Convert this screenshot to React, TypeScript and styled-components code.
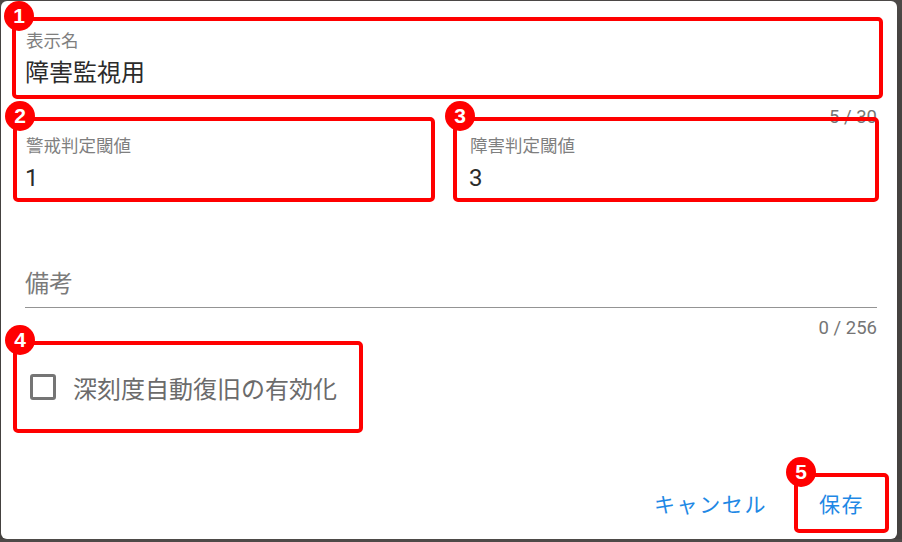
import { FC } from 'react'
import styled, { createGlobalStyle } from 'styled-components'

const GlobalStyle = createGlobalStyle`
	html, body {
		margin: 0;
		padding: 0;
	}
	body {
		background: #4d4a48;
		font-family: Roboto, 'Noto Sans CJK JP', sans-serif;
		overflow: hidden;
	}
`

const Dialog = styled.div`
	box-sizing: border-box;
	margin: 1px 0 0 1px;
	width: 896px;
	height: 538px;
	background: #fff;
	border-radius: 6px;
	display: flex;
	flex-direction: column;
	box-shadow: 0 11px 15px -7px rgba(0, 0, 0, 0.2), 0 24px 38px 3px rgba(0, 0, 0, 0.14);
`

const Content = styled.div`
	padding: 16px 20px 0 24px;
	display: flex;
	flex-direction: column;
`

const FieldGrid = styled.div`
	display: grid;
	grid-template-columns: 1fr 1fr;
	column-gap: 36px;
`

const FieldBox = styled.div`
	position: relative;
	box-sizing: border-box;
	height: 80px;
	padding-top: 14px;
	display: flex;
	flex-direction: column;
`

const FieldLabel = styled.label`
	font-size: 17.5px;
	line-height: 20px;
	color: #7f7f7f;
	padding-left: 1px;
`

const FieldValue = styled.div`
	margin-top: 8px;
	font-size: 24px;
	line-height: 28px;
	color: #2b2b2b;
`

const NoteField = styled.div`
	position: relative;
	box-sizing: border-box;
	height: 81px;
	padding-top: 43px;
	border-bottom: 1px solid #949494;
	font-size: 24px;
	line-height: 28px;
	color: #7a7a7a;
`

const HelperRow = styled.div`
	box-sizing: border-box;
	height: 25px;
	padding-top: 10px;
	text-align: right;
	font-size: 18.5px;
	line-height: 20px;
	color: #757575;
`

const CheckRow = styled.label`
	position: relative;
	align-self: flex-start;
	margin-top: 24px;
	height: 60px;
	padding-left: 5px;
	display: inline-flex;
	align-items: center;
	gap: 17px;
	font-size: 24px;
	color: #6b6b6b;
`

const CheckSquare = styled.span`
	box-sizing: border-box;
	width: 26px;
	height: 26px;
	border: 3px solid #757575;
	border-radius: 3px;
`

const Actions = styled.div`
	margin-top: auto;
	padding: 0 11px 10px 0;
	display: flex;
	justify-content: flex-end;
	align-items: center;
	gap: 18px;
`

const TextButton = styled.button`
	position: relative;
	box-sizing: border-box;
	height: 52px;
	min-width: 89px;
	padding: 0 12px;
	border: none;
	background: transparent;
	color: #1e88e5;
	font-family: Roboto, 'Noto Sans CJK JP', sans-serif;
	font-size: 21px;
	letter-spacing: 1.6px;
	cursor: pointer;
`

const Frame = styled.div<{ $inset: string }>`
	position: absolute;
	inset: ${({ $inset }) => $inset};
	border: 4px solid #ff0000;
	border-radius: 5px;
	pointer-events: none;
	z-index: 2;
`

const Badge = styled.span`
	position: absolute;
	left: -12px;
	top: -20px;
	width: 30px;
	height: 30px;
	border-radius: 50%;
	background: #ff0000;
	color: #fff;
	font-family: 'Liberation Sans', Arial, sans-serif;
	font-weight: bold;
	font-size: 21px;
	line-height: 30px;
	text-align: center;
	letter-spacing: 0;
`

type MarkProps = {
	n: number
	inset: string
}

const Mark: FC<MarkProps> = ({ n, inset }) => (
	<Frame $inset={inset}>
		<Badge>{n}</Badge>
	</Frame>
)

export default function App() {
	return (
		<>
			<GlobalStyle />
			<Dialog>
				<Content>
					<FieldBox>
						<FieldLabel>表示名</FieldLabel>
						<FieldValue>障害監視用</FieldValue>
						<Mark n={1} inset={'0 -6px -2px -13px'} />
					</FieldBox>
					<HelperRow>5 / 30</HelperRow>
					<FieldGrid>
						<FieldBox>
							<FieldLabel>警戒判定閾値</FieldLabel>
							<FieldValue>1</FieldValue>
							<Mark n={2} inset={'-5px -2px 0 -12px'} />
						</FieldBox>
						<FieldBox>
							<FieldLabel>障害判定閾値</FieldLabel>
							<FieldValue>3</FieldValue>
							<Mark n={3} inset={'-5px -2px 0 -16px'} />
						</FieldBox>
					</FieldGrid>
					<HelperRow />
					<NoteField>備考</NoteField>
					<HelperRow>0 / 256</HelperRow>
					<CheckRow>
						<CheckSquare />
						深刻度自動復旧の有効化
						<Mark n={4} inset={'-16px -26px -16px -12px'} />
					</CheckRow>
				</Content>
				<Actions>
					<TextButton>キャンセル</TextButton>
					<TextButton>
						保存
						<Mark n={5} inset={'-4px -3px -4px -3px'} />
					</TextButton>
				</Actions>
			</Dialog>
		</>
	)
}
